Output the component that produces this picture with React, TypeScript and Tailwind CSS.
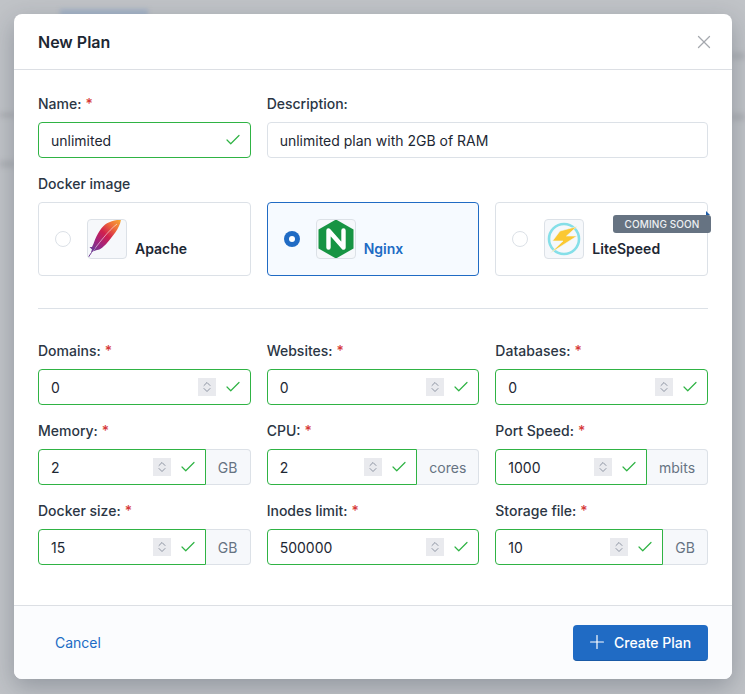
import { Check, Plus, X, ChevronUp, ChevronDown } from "lucide-react";
import type { ReactNode } from "react";

type FieldProps = {
  label: string;
  value: string;
  addon?: string;
  addonWidth?: string;
};

const Label = ({ text, required }: { text: string; required?: boolean }) => (
  <label className="mb-[8px] block h-[20px] text-[14px] leading-[20px] font-medium text-[#2b3644]">
    {text}
    {required && <span className="ml-1 text-[#d63939]">*</span>}
  </label>
);

const Spinner = () => (
  <span className="flex h-[18px] w-[18px] shrink-0 flex-col items-center justify-center bg-[#e9eaee] text-[#7c8493]">
    <ChevronUp size={14} strokeWidth={1.7} className="-mb-[3px]" />
    <ChevronDown size={14} strokeWidth={1.7} className="-mt-[3px]" />
  </span>
);

const NumberField = ({ label, value, addon, addonWidth }: FieldProps) => (
  <div>
    <Label text={label} required />
    <div className="flex h-[36px]">
      <div
        className={
          "flex min-w-0 flex-1 items-center border border-[#2fb344] bg-white pr-[8px] pl-[12px] " +
          (addon ? "rounded-l-[4px]" : "rounded-[4px]")
        }
      >
        <input
          readOnly
          value={value}
          className="w-full min-w-0 flex-1 bg-transparent text-[14px] text-[#1d2733] outline-none"
        />
        <Spinner />
        <Check size={18} strokeWidth={1.6} className="ml-[8px] shrink-0 text-[#2fb344]" />
      </div>
      {addon && (
        <div
          className={
            "flex items-center justify-center rounded-r-[4px] border border-l-0 border-[#dce1e7] bg-[#f6f8fb] text-[14px] text-[#667382] " +
            addonWidth
          }
        >
          {addon}
        </div>
      )}
    </div>
  </div>
);

const ApacheIcon = () => (
  <svg viewBox="0 0 38 38" className="h-full w-full">
    <defs>
      <linearGradient id="feather" x1="0.95" y1="0" x2="0.1" y2="0.95">
        <stop offset="0" stopColor="#f7a532" />
        <stop offset="0.25" stopColor="#ee6a3a" />
        <stop offset="0.5" stopColor="#cf1f4e" />
        <stop offset="0.75" stopColor="#a3247c" />
        <stop offset="1" stopColor="#6d3a93" />
      </linearGradient>
    </defs>
    <path
      d="M33 -0.5C28 0 23 1 19 3.3C14 6 9 14 5.7 23.3L4 27L1.5 27L4 29.5L3 32L9 30C13 30 17 25 19 23C24 17 32 8 33 -0.5Z"
      fill="url(#feather)"
    />
    <path d="M29 4C20 11 11 23 0.5 37" stroke="#ffffff" strokeOpacity="0.7" strokeWidth="0.8" fill="none" />
    <path d="M7 27.5C4.5 31 2.5 34 0.5 37" stroke="#6d3a93" strokeWidth="1" fill="none" />
  </svg>
);

const NginxIcon = () => (
  <svg viewBox="0 0 38 38" className="h-full w-full">
    <path d="M19 -0.5L36.5 9.5V28.5L19 38.5L1.5 28.5V9.5Z" fill="#179443" />
    <path
      d="M11.5 27.5V10.5L26.5 27.5V10.5"
      fill="none"
      stroke="#ffffff"
      strokeWidth="4.4"
      strokeLinecap="round"
      strokeLinejoin="round"
    />
  </svg>
);

const LiteSpeedIcon = () => (
  <svg viewBox="0 0 38 38" className="h-full w-full">
    <circle cx="19" cy="19" r="15" fill="none" stroke="#85dfe8" strokeWidth="2.6" />
    <path d="M32 6.5L15 11L7.5 21H18L5.5 33L32 16H21.5Z" fill="#fbc833" stroke="#eef9fb" strokeWidth="0.6" />
  </svg>
);

type CardProps = {
  name: string;
  icon: ReactNode;
  selected?: boolean;
  badge?: string;
};

const ImageCard = ({ name, icon, selected, badge }: CardProps) => (
  <div
    className={
      "relative flex h-[74px] items-center rounded-[4px] border pr-[16px] pl-[16px] " +
      (selected ? "border-[#206bc4] bg-[#f6faff]" : "border-[#dce1e7] bg-white")
    }
  >
    {selected ? (
      <span className="flex h-[16px] w-[16px] shrink-0 items-center justify-center rounded-full bg-[#206bc4]">
        <span className="h-[6px] w-[6px] rounded-full bg-white" />
      </span>
    ) : (
      <span className="h-[16px] w-[16px] shrink-0 rounded-full border border-[#dce1e7] bg-white" />
    )}
    <span className="ml-[16px] h-[40px] w-[40px] shrink-0 overflow-hidden rounded-[4px] border border-[#dce1e7] bg-[#f6f8fb]">
      {icon}
    </span>
    <span
      className={
        "mt-[20px] ml-[8px] text-[14px] leading-[20px] font-semibold " +
        (selected ? "text-[#206bc4]" : "text-[#1d2733]")
      }
    >
      {name}
    </span>
    {badge && (
      <>
        <svg viewBox="0 0 4 4" className="absolute top-[8px] -right-[3px] h-[4px] w-[4px]">
          <path d="M0 0L4 4H0Z" fill="#1f5da8" />
        </svg>
        <span className="absolute top-[12px] -right-[4px] flex h-[18px] w-[98px] items-center justify-center rounded-[3px] bg-[#667382] text-[10px] font-medium tracking-[0.1px] text-[#eef0f3]">
          {badge}
        </span>
      </>
    )}
  </div>
);

export default function App() {
  return (
    <div className="relative h-[694px] w-[745px] overflow-hidden bg-[#c0c3c7] p-[14px] font-['Inter',sans-serif]">
      {/* blurred page behind the dialog */}
      <div className="absolute top-[9px] left-[60px] h-[8px] w-[88px] bg-[#a5b3c6] blur-[2px]" />
      <div className="absolute top-[112px] left-0 h-[6px] w-[14px] bg-[#b2b5b9] blur-[2px]" />
      <div className="absolute top-[160px] left-0 h-[8px] w-[14px] bg-[#b2b5b9] blur-[2px]" />
      <div className="absolute top-[52px] right-0 h-[8px] w-[13px] bg-[#b2b5b9] blur-[2px]" />
      <div className="absolute top-[113px] right-0 h-[8px] w-[13px] bg-[#b2b5b9] blur-[2px]" />

      <div className="relative flex h-[665px] w-[718px] flex-col overflow-hidden rounded-[8px] bg-white shadow-[0_8px_24px_rgba(30,41,59,0.28)]">
        <div className="flex h-[56px] shrink-0 items-center justify-between border-b border-[#dcdfe4] pr-[17px] pl-[24px]">
          <h2 className="text-[16px] font-semibold text-[#1d2733]">New Plan</h2>
          <X size={22} strokeWidth={1.4} className="text-[#a5a9ae]" />
        </div>

        <div className="flex-1 px-[24px] pt-[24px]">
          <div className="grid grid-cols-3 gap-x-[16px]">
            <div>
              <Label text="Name:" required />
              <div className="flex h-[36px] items-center rounded-[4px] border border-[#2fb344] bg-white pr-[8px] pl-[12px]">
                <input
                  readOnly
                  value="unlimited"
                  className="w-full min-w-0 flex-1 bg-transparent text-[14px] text-[#1d2733] outline-none"
                />
                <Check size={18} strokeWidth={1.6} className="shrink-0 text-[#2fb344]" />
              </div>
            </div>
            <div className="col-span-2">
              <Label text="Description:" />
              <div className="flex h-[36px] items-center rounded-[4px] border border-[#dce1e7] bg-white px-[12px]">
                <input
                  readOnly
                  value="unlimited plan with 2GB of RAM"
                  className="w-full bg-transparent text-[14px] text-[#1d2733] outline-none"
                />
              </div>
            </div>
          </div>

          <div className="mt-[16px]">
            <Label text="Docker image" />
            <div className="grid grid-cols-3 gap-x-[16px]">
              <ImageCard name="Apache" icon={<ApacheIcon />} />
              <ImageCard name="Nginx" icon={<NginxIcon />} selected />
              <ImageCard name="LiteSpeed" icon={<LiteSpeedIcon />} badge="COMING SOON" />
            </div>
          </div>

          <div className="mt-[32px] mb-[32px] h-px bg-[#dce1e7]" />

          <div className="grid grid-cols-3 gap-x-[16px] gap-y-[16px]">
            <NumberField label="Domains:" value="0" />
            <NumberField label="Websites:" value="0" />
            <NumberField label="Databases:" value="0" />
            <NumberField label="Memory:" value="2" addon="GB" addonWidth="w-[45px]" />
            <NumberField label="CPU:" value="2" addon="cores" addonWidth="w-[62px]" />
            <NumberField label="Port Speed:" value="1000" addon="mbits" addonWidth="w-[61px]" />
            <NumberField label="Docker size:" value="15" addon="GB" addonWidth="w-[45px]" />
            <NumberField label="Inodes limit:" value="500000" />
            <NumberField label="Storage file:" value="10" addon="GB" addonWidth="w-[45px]" />
          </div>
        </div>

        <div className="flex h-[74px] shrink-0 items-center justify-between border-t border-[#dcdfe4] bg-[#fbfcfe] pr-[24px] pl-[41px]">
          <a className="text-[14px] text-[#206bc4]">Cancel</a>
          <button className="flex h-[36px] w-[135px] items-center gap-[6px] rounded-[4px] border-b border-[#1a5aa6] bg-[#206bc4] pl-[13px] text-[14px] font-medium text-white">
            <Plus size={22} strokeWidth={1.3} />
            Create Plan
          </button>
        </div>
      </div>
    </div>
  );
}
